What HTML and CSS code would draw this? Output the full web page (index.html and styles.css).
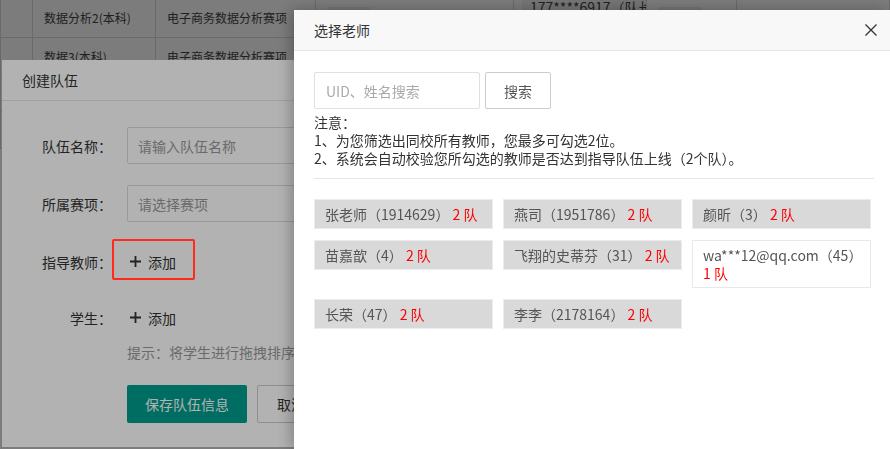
FILE: index.html
```html
<!DOCTYPE html>
<html lang="zh-CN">
<head>
    <meta charset="UTF-8">
    <meta name="viewport" content="width=device-width, initial-scale=1.0">
    <title>选择老师</title>
    <link rel="stylesheet" href="styles.css">
</head>
<body>
    <!-- 背景里的队伍列表 -->
    <table class="team-table">
        <colgroup>
            <col style="width:32px">
            <col style="width:123px">
            <col style="width:160px">
            <col style="width:198px">
            <col style="width:133px">
            <col style="width:90px">
            <col>
        </colgroup>
        <tr class="row-first">
            <td></td>
            <td>数据分析2(本科)</td>
            <td>电子商务数据分析赛项</td>
            <td class="cell-top"><span class="tag">禁用</span></td>
            <td class="cell-top"><span class="phone">177****6917（队长）</span></td>
            <td class="cell-top"><span class="tag">队长</span></td>
            <td></td>
        </tr>
        <tr>
            <td></td>
            <td>数据3(本科)</td>
            <td>电子商务数据分析赛项</td>
            <td></td>
            <td></td>
            <td></td>
            <td></td>
        </tr>
        <tr><td></td><td></td><td></td><td></td><td></td><td></td><td></td></tr>
        <tr><td></td><td></td><td></td><td></td><td></td><td></td><td></td></tr>
    </table>

    <div class="mask"></div>

    <!-- 创建队伍弹窗 -->
    <div class="dialog">
        <div class="dialog-header">创建队伍</div>
        <div class="dialog-body">
            <div class="form-row">
                <label class="form-label">队伍名称：</label>
                <input class="form-input" type="text" placeholder="请输入队伍名称">
            </div>
            <div class="form-row">
                <label class="form-label">所属赛项：</label>
                <input class="form-input" type="text" placeholder="请选择赛项">
            </div>
            <div class="form-row">
                <label class="form-label">指导教师：</label>
                <span class="add-link">
                    <svg width="11" height="11" viewBox="0 0 11 11"><path d="M5.5 0v11M0 5.5h11" stroke="#333" stroke-width="1.8"/></svg>
                    添加
                </span>
            </div>
            <div class="form-row form-row-tight">
                <label class="form-label">学生：</label>
                <span class="add-link">
                    <svg width="11" height="11" viewBox="0 0 11 11"><path d="M5.5 0v11M0 5.5h11" stroke="#333" stroke-width="1.8"/></svg>
                    添加
                </span>
            </div>
            <div class="form-tip">提示：将学生进行拖拽排序，排在第一位的为队长</div>
            <div class="form-actions">
                <button class="btn-save">保存队伍信息</button>
                <button class="btn-cancel">取消</button>
            </div>
        </div>
    </div>

    <div class="mask"></div>

    <!-- 选择老师抽屉 -->
    <div class="drawer">
        <div class="drawer-header">
            <span>选择老师</span>
            <svg class="drawer-close" width="12" height="12" viewBox="0 0 12 12"><path d="M0.5 0.5l11 11M11.5 0.5l-11 11" stroke="#333" stroke-width="1.3"/></svg>
        </div>
        <div class="drawer-body">
            <div class="search-bar">
                <input class="search-input" type="text" placeholder="UID、姓名搜索">
                <button class="search-btn">搜索</button>
            </div>
            <div class="notice">
                <div>注意：</div>
                <div>1、为您筛选出同校所有教师，您最多可勾选2位。</div>
                <div>2、系统会自动校验您所勾选的教师是否达到指导队伍上线（2个队）。</div>
            </div>
            <div class="divider"></div>
            <div class="teacher-list">
                <div class="teacher"><span class="name">张老师（1914629）</span> <span class="count">2 队</span></div>
                <div class="teacher"><span class="name">燕司（1951786）</span> <span class="count">2 队</span></div>
                <div class="teacher"><span class="name">颜昕（3）</span> <span class="count">2 队</span></div>
                <div class="teacher"><span class="name">苗嘉歆（4）</span> <span class="count">2 队</span></div>
                <div class="teacher"><span class="name">飞翔的史蒂芬（31）</span> <span class="count">2 队</span></div>
                <div class="teacher teacher-free"><span class="name">wa***12@qq.com（45）</span> <span class="count">1 队</span></div>
                <div class="teacher"><span class="name">长荣（47）</span> <span class="count">2 队</span></div>
                <div class="teacher"><span class="name">李李（2178164）</span> <span class="count">2 队</span></div>
            </div>
        </div>
    </div>

    <!-- 截图上的红框标注 -->
    <div class="mark"></div>
</body>
</html>
```

FILE: styles.css
```css
body {
    margin: 0;
    background: #fff;
    font-family: "Noto Sans CJK SC", "Noto Sans", sans-serif;
    font-size: 14px;
    color: #333;
    overflow: hidden;
    height: 449px;
}

.team-table {
    width: 100%;
    margin-top: -3px;
    border-collapse: collapse;
    table-layout: fixed;
    font-size: 12px;
    color: #444;
}

.team-table td {
    height: 36px;
    padding: 0 11px;
    border: 1px solid #dadada;
    white-space: nowrap;
    overflow: hidden;
}

.team-table tr.row-first td {
    height: 39px;
}

.team-table td.cell-top {
    vertical-align: top;
}

.tag {
    display: inline-block;
    margin-top: 9px;
    padding: 0 10px;
    line-height: 22px;
    background: #f0f0f0;
    border-radius: 3px;
    color: #999;
}

.phone {
    display: inline-block;
    padding: 0 8px;
    line-height: 18px;
    font-size: 14px;
    background: #f3f3f3;
    margin-left: -3px;
}

.mask {
    position: fixed;
    top: 0;
    left: 0;
    right: 0;
    bottom: 0;
    background: rgba(0, 0, 0, 0.3);
}

/* 创建队伍 */
.dialog {
    position: absolute;
    left: 2px;
    top: 60px;
    width: 640px;
    height: 387px;
    background: #fff;
}

.dialog-header {
    height: 40px;
    line-height: 41px;
    padding: 0 20px;
    border-bottom: 1px solid #e6e6e6;
}

.dialog-body {
    padding-top: 26px;
}

.form-row {
    display: flex;
    align-items: center;
    height: 37px;
    margin-bottom: 21px;
}

.form-row-tight {
    margin-top: -2px;
    margin-bottom: 7px;
}

.form-label {
    width: 110px;
    margin-right: 15px;
    text-align: right;
    color: #333;
}

.form-input {
    width: 300px;
    height: 37px;
    box-sizing: border-box;
    padding: 0 10px;
    border: 1px solid #dcdcdc;
    border-radius: 2px;
    font-family: inherit;
    font-size: 14px;
    outline: none;
}

.form-input::placeholder {
    color: #999;
}

.add-link {
    display: flex;
    align-items: center;
    gap: 7px;
    padding-left: 3px;
    color: #333;
}

.form-tip {
    margin-left: 125px;
    line-height: 18px;
    color: #999;
    white-space: nowrap;
    margin-bottom: 24px;
}

.form-actions {
    margin-left: 125px;
    display: flex;
    gap: 10px;
}

.btn-save {
    width: 120px;
    height: 38px;
    border: none;
    border-radius: 2px;
    background: #009d8d;
    color: #fff;
    font-family: inherit;
    font-size: 14px;
}

.btn-cancel {
    width: 80px;
    height: 38px;
    border: 1px solid #ccc;
    border-radius: 2px;
    background: #fff;
    color: #333;
    font-family: inherit;
    font-size: 14px;
    text-align: left;
    padding-left: 19px;
}

/* 选择老师 */
.drawer {
    position: fixed;
    left: 294px;
    top: 10px;
    right: 0;
    bottom: 0;
    background: #fff;
    box-shadow: -3px 0 14px rgba(0, 0, 0, 0.28);
}

.drawer-header {
    display: flex;
    justify-content: space-between;
    align-items: center;
    height: 40px;
    padding: 0 13px 0 20px;
    background: #f8f8f8;
    border-bottom: 1px solid #e8e8e8;
}

.drawer-body {
    padding: 21px 16px 0 20px;
}

.search-bar {
    display: flex;
    gap: 5px;
}

.search-input {
    width: 166px;
    height: 37px;
    box-sizing: border-box;
    padding: 0 11px;
    border: 1px solid #e0e0e0;
    border-radius: 2px;
    font-family: inherit;
    font-size: 14px;
    outline: none;
}

.search-input::placeholder {
    color: #aaa;
}

.search-btn {
    width: 66px;
    height: 37px;
    border: 1px solid #ccc;
    border-radius: 2px;
    background: #fff;
    color: #555;
    font-family: inherit;
    font-size: 14px;
}

.notice {
    margin-top: 4px;
    line-height: 18px;
    color: #333;
}

.divider {
    margin-top: 11px;
    border-top: 1px solid #e5e5e5;
}

.teacher-list {
    display: flex;
    flex-wrap: wrap;
    align-items: flex-start;
    gap: 11px 10px;
    margin-top: 20px;
}

.teacher {
    width: 179px;
    box-sizing: border-box;
    padding: 5px 10px;
    line-height: 18px;
    background: #d9d9d9;
    border: 1px solid #ececec;
    color: #555;
}

.teacher-free {
    background: #fff;
    border-color: #e8e8e8;
}

.name {
    white-space: nowrap;
}

.count {
    color: #f00;
    white-space: nowrap;
}

.mark {
    position: absolute;
    left: 112px;
    top: 239px;
    width: 79px;
    height: 37px;
    border: 2px solid #ff2a1a;
    border-radius: 2px;
}
```
